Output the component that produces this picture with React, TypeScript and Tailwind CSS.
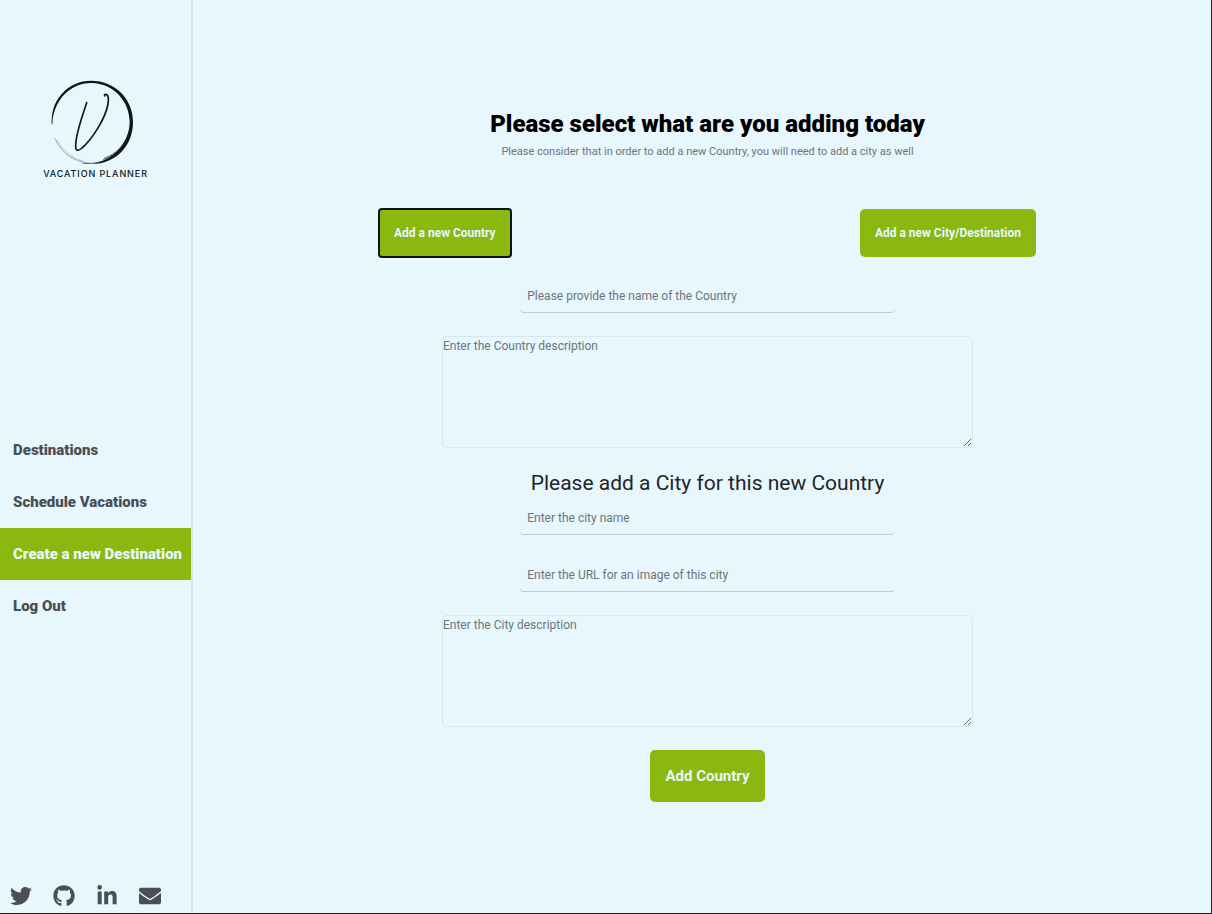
import { useState } from "react";
import { FaEnvelope, FaGithub, FaLinkedinIn, FaTwitter } from "react-icons/fa";

const navItems = ["Destinations", "Schedule Vacations", "Create a new Destination", "Log Out"];

const socials = [
  { label: "Twitter", Icon: FaTwitter },
  { label: "GitHub", Icon: FaGithub },
  { label: "LinkedIn", Icon: FaLinkedinIn },
  { label: "Email", Icon: FaEnvelope },
];

function Logo() {
  return (
    <a href="#home" className="flex flex-col items-center gap-1 text-[#111618]">
      <svg viewBox="0 0 252 252" className="mr-1.5 size-[84px]" fill="none" stroke="currentColor" strokeLinecap="round">
        <path
          d="M3 130C-3 62 50 2 120 2C192 2 246 56 246 126C246 198 194 252 122 252C180 244 235 194 236 126C236 64 187 10 122 9C58 8 9 60 3 130Z"
          fill="currentColor"
          stroke="none"
        />
        <path d="M12 176C31 219 67 245 116 250" strokeWidth="2" opacity=".5" />
        <path d="M19 181C37 214 63 234 96 243" strokeWidth="1.5" strokeDasharray="14 4 6 5" opacity=".45" />
        <path d="M161 233C196 221 222 194 233 158" strokeWidth="2" opacity=".6" />
        <path d="M158 238C198 224 224 194 236 158" strokeWidth="3" opacity=".8" />
        <path d="M3 132C3 114 6 96 14 80" strokeWidth="3" opacity=".7" />
        <path d="M96 250C130 253 160 244 182 232" strokeWidth="2.5" opacity=".7" />
        <path
          d="M107 68C95 106 75 158 74 195C73 213 81 215 93 204C124 177 164 114 171 72C174 53 171 43 164 43C161 43 160 46 161 48"
          strokeWidth="5"
          strokeLinejoin="round"
        />
      </svg>
      <span className="font-['Inter',sans-serif] text-[9px] leading-3 font-medium tracking-widest">VACATION PLANNER</span>
    </a>
  );
}

function LineInput({ id, label }: { id: string; label: string }) {
  return (
    <input
      id={id}
      type="text"
      aria-label={label}
      placeholder={label}
      className="h-[34px] w-[57%] rounded-[4px] border-b border-[#bccdd5] bg-transparent px-[7px] text-xs text-[#212529] outline-none placeholder:text-[#6c757d]"
    />
  );
}

function Description({ id, label }: { id: string; label: string }) {
  return (
    <textarea
      id={id}
      aria-label={label}
      placeholder={label}
      className="block h-28 w-full max-w-[531px] resize rounded-[5px] border border-[#d6e8ef] bg-transparent text-xs leading-[18px] text-[#212529] outline-none placeholder:text-[#6c757d]"
    />
  );
}

export default function App() {
  const [mode, setMode] = useState("country");
  const choice =
    "h-12 rounded-[5px] bg-[#8ab80f] px-[15px] text-xs font-bold text-[#e8f6fe] -outline-offset-1 outline-[#111111] aria-pressed:rounded-[3px] aria-pressed:outline-2";

  return (
    <div className="flex min-h-screen border-r border-b border-[#1f2529] bg-[#e8f6fe] font-['Roboto',sans-serif] text-[#212529]">
      <aside className="flex w-[193px] shrink-0 flex-col border-r-2 border-[#d6e8ef]">
        <div className="flex justify-center pt-20 pb-[244px]">
          <Logo />
        </div>
        <nav className="flex flex-col">
          {navItems.map((item) => (
            <a
              key={item}
              href="#nav"
              aria-current={item === "Create a new Destination" ? "page" : undefined}
              className="flex h-[52px] items-center pl-[13px] text-[15px] font-black whitespace-nowrap text-[#494f54] aria-[current=page]:bg-[#8ab80f] aria-[current=page]:text-[#e8f6fe]"
            >
              {item}
            </a>
          ))}
        </nav>
        <div className="mt-auto flex gap-[21px] px-[10px] pb-[6px] text-[#494f54]">
          {socials.map(({ label, Icon }) => (
            <a key={label} href="#social" aria-label={label}>
              <Icon size={22} />
            </a>
          ))}
        </div>
      </aside>

      <main className="flex flex-1 flex-col items-center pt-[108px] pb-24 pl-[11px]">
        <h1 className="text-2xl leading-8 font-black text-black">Please select what are you adding today</h1>
        <p className="pt-1 text-[11px] leading-4 text-[#6c757d]">
          Please consider that in order to add a new Country, you will need to add a city as well
        </p>
        <form className="flex w-full max-w-[657px] flex-col items-center pt-[49px]" onSubmit={(e) => e.preventDefault()}>
          <div className="flex w-full justify-between pb-[22px]">
            <button type="button" aria-pressed={mode === "country"} onClick={() => setMode("country")} className={choice}>
              Add a new Country
            </button>
            <button type="button" aria-pressed={mode === "city"} onClick={() => setMode("city")} className={choice}>
              Add a new City/Destination
            </button>
          </div>
          <div className="flex w-full flex-col items-center gap-[23px]">
            <LineInput id="country-name" label="Please provide the name of the Country" />
            <Description id="country-description" label="Enter the Country description" />
          </div>
          <h2 className="pt-[21px] pb-1 text-[21px] leading-7">Please add a City for this new Country</h2>
          <div className="flex w-full flex-col items-center gap-[23px]">
            <LineInput id="city-name" label="Enter the city name" />
            <LineInput id="city-image" label="Enter the URL for an image of this city" />
            <Description id="city-description" label="Enter the City description" />
            <button type="submit" className="h-[52px] rounded-[5px] bg-[#8ab80f] px-[15px] text-[15px] font-bold text-[#e8f6fe]">
              Add Country
            </button>
          </div>
        </form>
      </main>
    </div>
  );
}
